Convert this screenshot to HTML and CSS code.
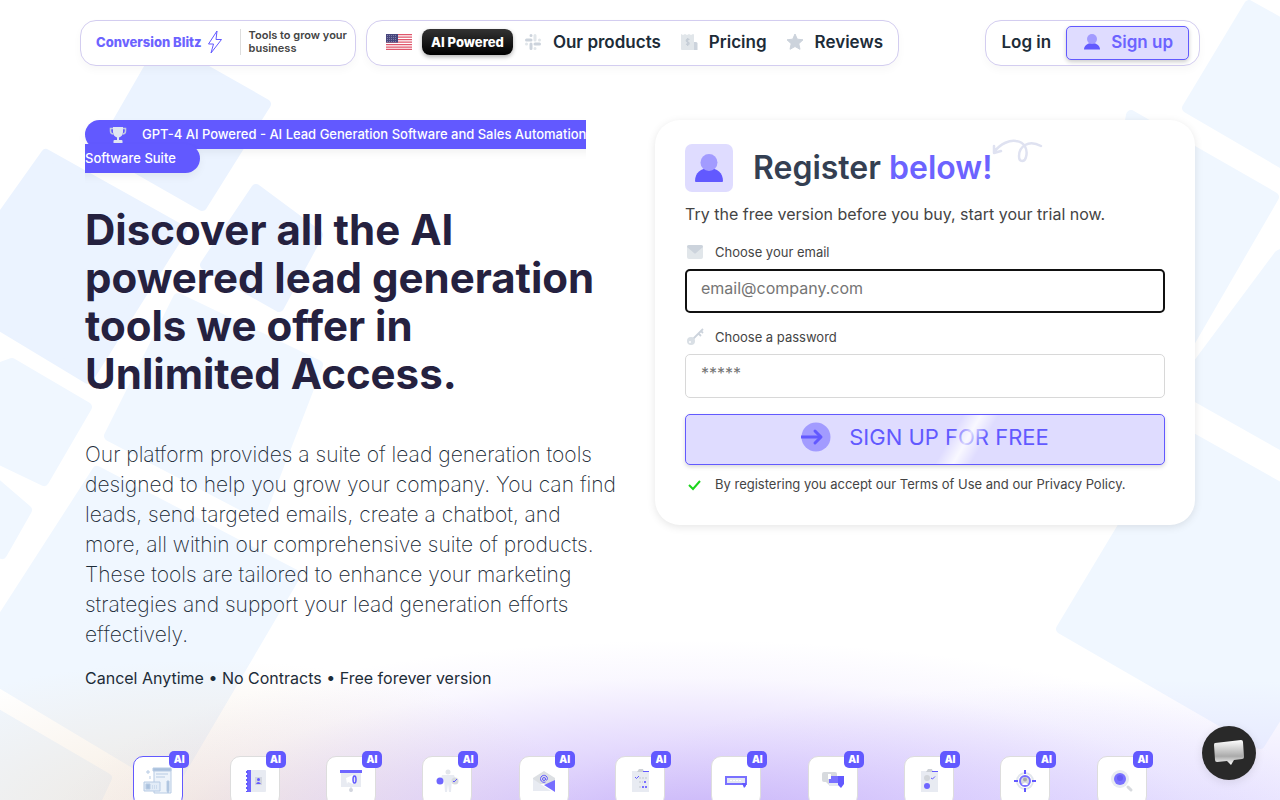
FILE: index.html
```html
<!DOCTYPE html>
<html lang="en">
<head>
    <meta charset="UTF-8">
    <meta name="viewport" content="width=device-width, initial-scale=1.0">
    <title>Conversion Blitz</title>
    <link rel="stylesheet" href="styles.css">
</head>
<body>
    <div class="backdrop" aria-hidden="true">
        <svg class="tiles tiles-left" width="330" height="800" viewBox="0 0 330 800" stroke-width="10" stroke-linejoin="round">
            <g fill="#ebf3ff" stroke="#ebf3ff">
                <path d="M162 45L266 104L202 206L102 149Z"/>
                <path d="M46 154L182 230L88 379L-8 321V230Z"/>
                <path d="M256 189L318 235L279 307L205 265Z"/>
            </g>
            <g fill="#f0f7ff" stroke="#f0f7ff">
                <path d="M178 298L318 365L260 515L109 436Z"/>
                <path d="M12 363L87 407L44 481L-8 456V370Z"/>
                <path d="M-8 480L27 510L2 554L-8 550Z"/>
                <path d="M97 471L296 575L172 786L-8 678V634Z"/>
                <path d="M-8 711L107 778L92 810H-8Z"/>
            </g>
        </svg>
        <svg class="tiles tiles-right" width="240" height="800" viewBox="1040 0 240 800" fill="#f0f7ff" stroke="#f0f7ff" stroke-width="10" stroke-linejoin="round">
            <path d="M1249 5L1290 28V168L1187 108Z"/>
            <path d="M1131 115L1274 197L1190 342L1100 290Z"/>
            <path d="M1279 255L1290 250V450L1180 388Z"/>
            <path d="M1180 431L1290 493V696L1260 744L1061 629Z"/>
        </svg>
        <div class="glow"></div>
    </div>

    <header class="header">
        <div class="pill brand">
            <a class="logo" href="#">Conversion Blitz
                <svg width="16" height="24" viewBox="0 0 16 24" fill="none" stroke="#6259ff" stroke-linejoin="round"><path d="M10 1L1.500 14H6.500L4 23L14.500 9.500H9Z"/></svg>
            </a>
            <span class="tagline">Tools to grow your<br>business</span>
        </div>
        <nav class="pill nav">
            <a class="flag" href="#" aria-label="English">
                <svg width="26" height="16" viewBox="0 0 26 16">
                    <path fill="#fff" d="M0 0h26v16H0z"/>
                    <path stroke="#e0566b" stroke-width="1.250" d="M0 .6h26M0 3.100h26M0 5.600h26M0 8h26M0 10.500h26M0 13h26M0 15.400h26"/>
                    <path fill="#48477d" d="M0 0h12v8.600H0z"/>
                    <path stroke="#8f8eb5" stroke-width=".8" stroke-dasharray="1 1" d="M1 1.500h10M1 3.500h10M1 5.500h10M1 7.500h10"/>
                </svg>
            </a>
            <a class="ai-pill" href="#">AI Powered</a>
            <a class="nav-link" href="#">
                <svg width="18" height="18" viewBox="0 0 18 18" stroke-width="3" stroke-linecap="round">
                    <path stroke="#ccd3dc" d="M2.500 7H7M7 2.500h.01M11 11h4.500M7 11v4.500"/>
                    <path stroke="#e1e6ea" d="M11 2.500V7M15.500 7h.01M2.500 11h.01M11 15.500h.01"/>
                </svg>
                Our products
            </a>
            <a class="nav-link" href="#">
                <svg width="18" height="18" viewBox="0 0 18 18">
                    <path fill="#ccd3dc" d="M13 9h3a1.500 1.500 0 0 1 1.500 1.500V17H12z"/>
                    <path fill="#e1e6ea" d="M1 1l2 1 2-1 2 1 2-1 2 1 2-1 1 .5V17H2a1 1 0 0 1-1-1z"/>
                    <path fill="none" stroke="#c5cdd6" stroke-width="1.200" d="M9.500 6.500c-3-1.200-4.500 1.500-2 2.400s2.500 3.400-1.500 2.300M7.700 5v8"/>
                </svg>
                Pricing
            </a>
            <a class="nav-link" href="#">
                <svg width="18" height="18" viewBox="0 0 18 18" fill="#ccd3dc" stroke="#ccd3dc" stroke-linejoin="round"><path d="M9 1l2.300 5.200 5.700.6-4.200 3.900 1.200 5.600L9 13.500l-5 2.800 1.200-5.600L1 6.800l5.700-.6z"/></svg>
                Reviews
            </a>
        </nav>
        <div class="pill account">
            <a class="login" href="#">Log in</a>
            <a class="signup" href="#">
                <svg width="18" height="18" viewBox="0 0 18 18">
                    <path fill="#6259ff" d="M1 16.500c0-3.500 3-6.500 8-6.500s8 3 8 6.500z"/>
                    <circle fill="#a29bff" cx="9" cy="6" r="5"/>
                </svg>
                Sign up
            </a>
        </div>
    </header>

    <main class="hero">
        <section class="intro">
            <p class="badge-line">
                <span class="badge"><svg width="18" height="18" viewBox="0 0 18 18"><path fill="#e0e6f2" d="M4 1h10v5c0 3-2 5-4 5.500V14h2.500a1 1 0 0 1 1 1v2h-9v-2a1 1 0 0 1 1-1H8v-2.500C6 11 4 9 4 6z"/><path fill="none" stroke="#c3cbe0" stroke-width="1.500" d="M4 2.500H1.500V5c0 2 1 3 3 3M14 2.500h2.500V5c0 2-1 3-3 3"/></svg>GPT-4 AI Powered - AI Lead Generation Software and Sales Automation<br>Software Suite</span>
            </p>
            <h1>Discover all the AI<br>powered lead generation<br>tools we offer in<br>Unlimited Access.</h1>
            <p class="lead">Our platform provides a suite of lead generation tools<br>designed to help you grow your company. You can find<br>leads, send targeted emails, create a chatbot, and<br>more, all within our comprehensive suite of products.<br>These tools are tailored to enhance your marketing<br>strategies and support your lead generation efforts<br>effectively.</p>
            <p class="notes">Cancel Anytime • No Contracts • Free forever version</p>
        </section>

        <form class="register">
            <div class="register-head">
                <span class="avatar">
                    <svg width="28" height="28" viewBox="0 0 28 28">
                        <path fill="#6259ff" d="M0 27c0-8 6-13 14-13s14 5 14 13q0 1-1 1H1q-1 0-1-1z"/>
                        <circle fill="#a29bff" cx="14" cy="8.500" r="8.500"/>
                    </svg>
                </span>
                <h2>Register <span>below!</span></h2>
                <svg class="squiggle" width="52" height="26" viewBox="0 0 52 26" fill="none" stroke="#dfe2f1" stroke-width="2.500" stroke-linecap="round" stroke-linejoin="round">
                    <path d="M2 14C9 5 18 2 24 3C33 4 36 12 34 19C33 24 27 25 27 18C27 9 36 1 49 8M2 8V15L9 13"/>
                </svg>
            </div>
            <p class="sub">Try the free version before you buy, start your trial now.</p>
            <label for="email">
                <svg width="20" height="18" viewBox="0 0 20 18">
                    <rect fill="#e1e6ea" x="2" y="2" width="16" height="14" rx="2"/>
                    <path fill="#ccd3dc" d="M4 2h12q2 0 2 2l-7 6q-1 1-2 0L2 4q0-2 2-2z"/>
                </svg>
                Choose your email
            </label>
            <input class="active" type="email" id="email" name="email" placeholder="email@company.com">
            <label for="password">
                <svg width="20" height="18" viewBox="0 0 20 18">
                    <path fill="none" stroke="#ccd3dc" stroke-width="1.800" d="M7 12L18 1M13 5l3 3M16 3l2 2"/>
                    <circle fill="#d9dfe5" cx="6" cy="13" r="4"/>
                    <circle fill="#fff" cx="5" cy="14" r="1"/>
                </svg>
                Choose a password
            </label>
            <input type="password" id="password" name="password" placeholder="*****">
            <button type="submit">
                <svg width="30" height="30" viewBox="0 0 30 30">
                    <circle fill="#a29bff" cx="15" cy="15" r="14.500"/>
                    <path fill="none" stroke="#6259ff" stroke-width="3" d="M0 15h19" />
                    <path fill="none" stroke="#6259ff" stroke-width="3" stroke-linecap="round" stroke-linejoin="round" d="M14 9l6 6-6 6"/>
                </svg>
                SIGN UP FOR FREE
            </button>
            <p class="terms">
                <svg width="20" height="18" viewBox="0 0 20 18" fill="none" stroke="#1bd41b" stroke-width="2"><path d="M4 10l4 4 7-8"/></svg>
                By registering you accept our Terms of Use and our Privacy Policy.
            </p>
        </form>
    </main>

    <section class="tools">
        <a class="tool current" href="#" aria-label="Page builder"><span class="tag">AI</span>
            <svg width="32" height="28" viewBox="0 0 32 28" fill="none" stroke="#b7cbe4">
                <path fill="#edf3fa" d="M12 2h17v24H12z"/><path fill="#a9c0dc" d="M11 1h18v3H11z"/>
                <path d="M14 7h12M14 10h9M6 3v4M4 5h4M8 9v3"/>
                <path fill="#e2ecf7" d="M2 15h16v9H2z"/><path fill="#a9c0dc" d="M4 17h4v5H4zM25 14h2v10l-1 2-1-2z"/><path stroke-dasharray="1 1" d="M10 19h6M10 21h6"/>
            </svg></a>
        <a class="tool" href="#" aria-label="Contacts"><span class="tag">AI</span>
            <svg width="32" height="28" viewBox="0 0 32 28">
                <rect fill="#e8ebf2" x="8" y="3" width="19" height="22" rx="1"/><path fill="#6f66ff" d="M8 3h4v22H8z"/>
                <path stroke="#6259ff" stroke-width="2" stroke-dasharray="2 2" d="M8 4v21"/><rect fill="#d2d6df" x="16" y="10" width="7" height="8"/>
                <circle fill="#6259ff" cx="19.500" cy="12.500" r="1.500"/><path fill="#6259ff" d="M17 17q2-4 5 0z"/>
            </svg></a>
        <a class="tool" href="#" aria-label="Presentations"><span class="tag">AI</span>
            <svg width="32" height="28" viewBox="0 0 32 28">
                <path fill="#e8ebf2" d="M6 5h20v15H6zM15 20h2v5h-2z"/><path fill="#6f66ff" d="M5 3h22v3H5z"/>
                <path fill="#fff" d="M11 11l7-3v9l-5-2-1 2z"/><ellipse fill="none" stroke="#6259ff" stroke-width="1.500" cx="19.500" cy="12.500" rx="1.500" ry="3.500"/><circle fill="#d3d6de" cx="16" cy="23" r="2"/>
            </svg></a>
        <a class="tool" href="#" aria-label="Personas"><span class="tag">AI</span>
            <svg width="32" height="28" viewBox="0 0 32 28">
                <circle fill="#e2e5ea" cx="17" cy="5" r="2.500"/><path fill="#e8ebf2" d="M11 8h12l3 8-5-4-1 13h-2l-1-8-1 8h-2l-1-13-4 4z"/>
                <circle fill="#6f66ff" cx="9" cy="14" r="3.500"/><circle fill="#d7dade" cx="24" cy="14" r="3.500"/><path fill="none" stroke="#6259ff" d="M22 14l1 1 3-3"/>
            </svg></a>
        <a class="tool" href="#" aria-label="Emails"><span class="tag">AI</span>
            <svg width="32" height="28" viewBox="0 0 32 28">
                <path fill="#dcdfe3" d="M5 11L16 4l11 7v6H5z"/><path fill="#e8ebf2" d="M5 12l18 12H5z"/><path fill="#776eff" d="M27 13v12L16 18z"/>
                <circle fill="none" stroke="#6259ff" cx="16" cy="12" r="1.500"/><path fill="none" stroke="#6259ff" d="M17.500 11v1.500c1 1.500 2 0 2-1a3.500 3.500 0 1 0-2 3.500"/>
            </svg></a>
        <a class="tool" href="#" aria-label="Tasks"><span class="tag">AI</span>
            <svg width="32" height="28" viewBox="0 0 32 28">
                <path fill="#e8ebf2" d="M8 4h17v21H8z"/><path fill="#ccd0d6" d="M13 5l2-3h4l1 3z"/><path fill="none" stroke="#6259ff" d="M19 4.500h6M11 10l1.500 1.500L15 9"/>
                <path fill="none" stroke="#d5d9e0" stroke-width="2" stroke-dasharray="2 1" d="M15 11h8M15 15h4M15 20h2"/><path stroke="#7970ff" stroke-width="2" stroke-dasharray="2 1" d="M18 20h5M20 15h2"/>
            </svg></a>
        <a class="tool" href="#" aria-label="Banners"><span class="tag">AI</span>
            <svg width="32" height="28" viewBox="0 0 32 28">
                <rect fill="#e5e8f2" stroke="#7970ff" stroke-width="2" x="6" y="10" width="20" height="7"/><path stroke="#fff" stroke-dasharray="2 1" d="M10 13.500h11"/><path fill="#6259ff" d="M22 16h4v3l-2 2z"/>
            </svg></a>
        <a class="tool" href="#" aria-label="Chatbot"><span class="tag">AI</span>
            <svg width="32" height="28" viewBox="0 0 32 28">
                <rect fill="#d7dade" x="5" y="5" width="15" height="10" rx="2"/><path fill="#d7dade" d="M8 14h4v4z"/><rect fill="#7970ff" x="12" y="9" width="9" height="7"/>
                <path fill="#e5e8f2" d="M12 16h9v3h-9z"/><path fill="#6259ff" d="M21 9h6v8l-3 4-3-3z"/><path fill="#fff" d="M11 7h3v5h-3z"/>
            </svg></a>
        <a class="tool" href="#" aria-label="Surveys"><span class="tag">AI</span>
            <svg width="32" height="28" viewBox="0 0 32 28">
                <path fill="#e8ebf2" d="M8 4h17v21H8z"/><path fill="#ccd0d6" d="M13 5l2-3h4l1 3z"/><circle fill="#d2d5da" cx="14" cy="11" r="3"/><circle fill="#6f66ff" cx="14" cy="19" r="3"/>
                <path fill="none" stroke="#6259ff" d="M19 4.500h6M18 11l1.500 1L22 9.500"/>
            </svg></a>
        <a class="tool" href="#" aria-label="Targeting"><span class="tag">AI</span>
            <svg width="32" height="28" viewBox="0 0 32 28">
                <circle fill="none" stroke="#e2e6ec" stroke-width="2" cx="16" cy="14" r="8"/><circle fill="#d7dade" stroke="#7970ff" stroke-width="2" cx="16" cy="14" r="5"/>
                <circle fill="#aaa" cx="16" cy="12.500" r="2"/><path fill="#fff" d="M13 18q3-5 6 0z"/><path stroke="#6259ff" stroke-width="2" d="M16 3v4M16 21v4M5 14h4M23 14h4"/>
            </svg></a>
        <a class="tool" href="#" aria-label="Lead finder"><span class="tag">AI</span>
            <svg width="32" height="28" viewBox="0 0 32 28">
                <circle fill="#e8ebf2" cx="14" cy="12" r="9"/><circle fill="#7970ff" cx="14" cy="12" r="6"/><circle fill="#665cf5" cx="14" cy="11" r="3"/><path stroke="#d7dade" stroke-width="3" stroke-linecap="round" d="M22 20l3 3"/>
            </svg></a>
    </section>

    <button class="chat" type="button" aria-label="Open chat">
        <svg width="32" height="28" viewBox="0 0 32 28">
            <defs><linearGradient id="bubble" x1="0" y1="0" x2="0" y2="1"><stop offset="0" stop-color="#fff"/><stop offset=".65" stop-color="#aaa"/><stop offset="1" stop-color="#fff"/></linearGradient></defs>
            <path fill="url(#bubble)" d="M2 4l26-3q2 0 2 2l1 15q0 2-2 2l-8 1-3 5-4-4-10 1q-2 0-2-2L1 6q0-2 1-2z"/>
        </svg>
    </button>
</body>
</html>
```
FILE: styles.css
```css
* {
    box-sizing: border-box;
}
body {
    position: relative;
    margin: 0;
    min-height: 100vh;
    font-family: Inter, sans-serif;
    font-size: 16px;
    line-height: 24px;
    color: #1d2c38;
    background: #fff;
    overflow-x: hidden;
}
a {
    color: inherit;
    text-decoration: none;
}
h1, h2, p {
    margin: 0;
}
svg {
    flex: none;
}

/* background */
.backdrop {
    position: absolute;
    top: 0;
    left: 0;
    z-index: -1;
    width: 100%;
    height: 100vh;
    overflow: hidden;
}
.tiles {
    position: absolute;
    top: 0;
}
.tiles-left {
    left: 0;
}
.tiles-right {
    right: 0;
}
.glow {
    position: absolute;
    bottom: 0;
    width: 100%;
    height: 200px;
    background:
        radial-gradient(ellipse 50% 95% at 54% 115%, rgba(175, 145, 245, 0.7), rgba(180, 150, 250, 0.35) 45%, rgba(185, 160, 250, 0.08) 80%, rgba(185, 160, 250, 0)),
        radial-gradient(ellipse 50% 70% at 92% 110%, rgba(205, 195, 255, 0.5), rgba(205, 195, 255, 0)),
        radial-gradient(ellipse 30% 80% at 16% 110%, rgba(235, 215, 190, 0.5), rgba(235, 215, 190, 0));
}

/* header */
.header {
    display: flex;
    gap: 10px;
    max-width: 1120px;
    margin: 0 auto;
    padding-top: 20px;
    white-space: nowrap;
}
.pill {
    display: flex;
    align-items: center;
    height: 46px;
    padding: 0 15px 2px;
    border: 1px solid #d3cdf0;
    border-radius: 16px;
    background: #fff;
    box-shadow: 0 4px 8px rgba(0, 0, 0, 0.03);
}
.brand {
    width: 276px;
    padding-right: 0;
}
.logo {
    display: flex;
    align-items: center;
    gap: 5px;
    padding-right: 17px;
    font-size: 13px;
    font-weight: 800;
    color: #6c63ff;
}
.tagline {
    padding-left: 8px;
    border-left: 1px solid #ddd;
    font-size: 11px;
    font-weight: 600;
    line-height: 13px;
    color: #444;
}
.nav {
    padding-left: 19px;
}
.flag {
    display: flex;
    margin-right: 10px;
}
.ai-pill {
    padding: 0 9px;
    border-radius: 8px;
    background: linear-gradient(#333, #000);
    box-shadow: 0 2px 4px rgba(0, 0, 0, 0.3);
    font-size: 13px;
    font-weight: 800;
    line-height: 26px;
    color: #fff;
}
.nav-link {
    display: flex;
    align-items: center;
    gap: 11px;
    margin-left: 11px;
    font-size: 17px;
    font-weight: 600;
}
.nav-link + .nav-link {
    margin-left: 19px;
}
.account {
    gap: 15px;
    margin-left: auto;
    padding: 0 10px 0 15px;
}
.login, .signup {
    font-size: 17px;
    font-weight: 600;
}
.login {
    padding-bottom: 2px;
}
.signup {
    display: flex;
    align-items: center;
    gap: 10px;
    height: 34px;
    padding: 0 15px 2px 16px;
    border: 1px solid #6259ff;
    border-radius: 5px;
    background: #dfdcff;
    box-shadow: 0 2px 4px rgba(0, 0, 0, 0.2);
    color: #6c63ff;
}

/* hero */
.hero {
    display: grid;
    grid-template-columns: 1fr 1fr;
    gap: 30px;
    align-items: start;
    max-width: 1110px;
    margin: 54px auto 0;
}
.badge-line {
    padding-top: 2px;
    font-size: 13px;
    font-weight: 500;
    white-space: nowrap;
}
.badge {
    padding: 6px 24px 7px;
    border-radius: 16px;
    background: #6259ff;
    box-shadow: 0 4px 8px rgba(0, 0, 0, 0.05);
    color: #fff;
}
.badge svg {
    margin-right: 15px;
    vertical-align: middle;
}
h1 {
    margin: 36px 0 42px;
    font-size: 42px;
    font-weight: bold;
    line-height: 48px;
    color: #25213f;
    white-space: nowrap;
}
.lead {
    font-size: 21px;
    font-weight: 200;
    line-height: 30px;
    white-space: nowrap;
}
.notes {
    margin-top: 16px;
}

/* register card */
.register {
    padding: 24px 30px 29px;
    border-radius: 25px;
    background: #fff;
    box-shadow: 0 2px 8px rgba(0, 0, 0, 0.1);
    color: #444;
}
.register-head {
    display: flex;
    align-items: center;
    margin-bottom: 10px;
}
.avatar {
    display: flex;
    align-items: center;
    justify-content: center;
    width: 48px;
    height: 48px;
    margin-right: 20px;
    border-radius: 7px;
    background: #dfdcff;
}
h2 {
    font-size: 32px;
    font-weight: 600;
    line-height: 48px;
    color: #343f52;
}
h2 span {
    color: #6c63ff;
}
.squiggle {
    align-self: flex-start;
    margin-top: -6px;
}
.sub {
    margin-bottom: 14px;
}
.register label, .terms {
    display: flex;
    align-items: center;
    gap: 10px;
    font-size: 13px;
}
.register label {
    margin-bottom: 5px;
}
.register input {
    display: block;
    width: 100%;
    height: 44px;
    margin-bottom: 12px;
    padding: 0 15px 6px;
    border: 1px solid #d8d8d8;
    border-radius: 5px;
    background: #fff;
    font-family: inherit;
    font-size: 16px;
}
.register .active {
    padding: 0 14px 6px;
    border: 2px solid #111;
}
.register input::placeholder {
    color: #757575;
}
.register button {
    position: relative;
    display: flex;
    align-items: center;
    justify-content: center;
    gap: 18px;
    width: 100%;
    height: 51px;
    margin: 16px 0 7px;
    padding: 0 0 5px;
    border: 1px solid #6259ff;
    border-radius: 5px;
    background: #dfdcff;
    box-shadow: 0 2px 4px rgba(0, 0, 0, 0.15);
    overflow: hidden;
    font-family: inherit;
    font-size: 22px;
    color: #6259ff;
}
.register button::after {
    content: "";
    position: absolute;
    top: 0;
    left: 55%;
    width: 36px;
    height: 100%;
    background: linear-gradient(90deg, rgba(255, 255, 255, 0), rgba(255, 255, 255, 0.8), rgba(255, 255, 255, 0));
    transform: skewX(-30deg);
}

/* tools */
.tools {
    display: grid;
    grid-template-columns: repeat(11, 1fr);
    justify-items: center;
    max-width: 1060px;
    margin: 66px auto 0;
}
.tool {
    position: relative;
    display: flex;
    align-items: center;
    justify-content: center;
    width: 50px;
    height: 50px;
    border: 1px solid #ddd;
    border-radius: 10px;
    background: #fff;
}
.current {
    border-color: #6259ff;
}
.tag {
    position: absolute;
    top: -6px;
    right: -7px;
    width: 20px;
    border-radius: 5px;
    background: #6259ff;
    font-size: 10px;
    font-weight: 900;
    line-height: 17px;
    text-align: center;
    color: #fff;
}

.chat {
    position: fixed;
    right: 24px;
    bottom: 20px;
    display: flex;
    align-items: center;
    justify-content: center;
    width: 54px;
    height: 54px;
    padding: 0;
    border: 0;
    border-radius: 50%;
    background: #292929;
    box-shadow: 0 2px 10px rgba(0, 0, 0, 0.1);
}
```
